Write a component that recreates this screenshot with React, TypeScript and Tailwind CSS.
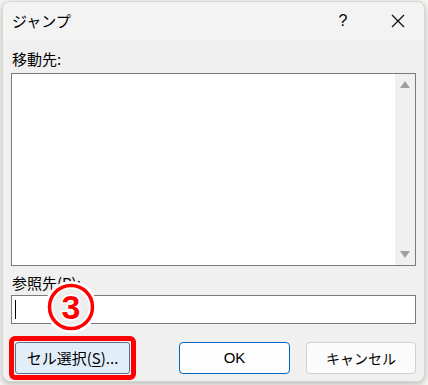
import React from 'react';

const font = { fontFamily: '"Noto Sans CJK JP", "Noto Sans", sans-serif' };

// Circled step marker drawn over the dialog
const StepBadge: React.FC = () => (
  <svg width="54" height="54" viewBox="0 0 54 54" className="absolute left-[41px] top-[278px]">
    <circle cx="27" cy="27" r="26" fill="white" />
    <circle cx="27" cy="27" r="21.5" fill="none" stroke="#ff0000" strokeWidth="3.5" />
    <circle cx="27" cy="27" r="18" fill="#dcdcdc" opacity="0.5" />
    <text
      x="27"
      y="39"
      textAnchor="middle"
      fontSize="34"
      fontWeight="700"
      fill="#ff0000"
      stroke="white"
      strokeWidth="3"
      paintOrder="stroke"
      style={{ fontFamily: '"Liberation Sans", Arial, sans-serif' }}
    >
      3
    </text>
  </svg>
);

const App: React.FC = () => {
  return (
    <div className="w-[428px] h-[385px] bg-[#f6f5f1] pl-[2px] pt-[1px]" style={font}>
      <div className="relative w-[423px] h-[381px] bg-[#f0f0f0] rounded-[8px] border border-[#d6d6d6] shadow-[0_2px_6px_rgba(0,0,0,0.25)] overflow-hidden">
        {/* Title bar */}
        <div className="h-[38px] bg-[#f3f3f3] flex items-center pl-[9px] text-[15px] text-black">
          <span>ジャンプ</span>
          <span className="ml-auto w-[20px] text-center mr-[38px] font-['Liberation_Sans'] text-[16px]">?</span>
          <svg width="14" height="14" viewBox="0 0 14 14" className="mr-[19px]">
            <path d="M1 1 L13 13 M13 1 L1 13" stroke="#111" strokeWidth="1.3" />
          </svg>
        </div>

        <div className="px-[8px]">
          <div className="text-[15px] leading-[20px] mt-[9px] ml-[1px]">移動先:</div>
          {/* List box */}
          <div className="mt-[4px] h-[193px] border border-[#7a7a7a] bg-white flex">
            <div className="flex-1" />
            <div className="w-[20px] bg-[#f0f0f0] flex flex-col items-center justify-between py-[7px]">
              <svg width="10" height="7" viewBox="0 0 10 7">
                <path d="M5 0 L10 7 L0 7 Z" fill="#a0a0a0" />
              </svg>
              <svg width="10" height="7" viewBox="0 0 10 7">
                <path d="M0 0 L10 0 L5 7 Z" fill="#a0a0a0" />
              </svg>
            </div>
          </div>

          <div className="text-[15px] leading-[20px] mt-[7px] ml-[1px]">参照先(R):</div>
          {/* Text input */}
          <div className="mt-[2px] h-[29px] border border-[#7a7a7a] bg-white flex items-center pl-[3px]">
            <div className="w-px h-[19px] bg-black" />
          </div>

          {/* Buttons */}
          <div className="flex items-center mt-[12px]">
            <div className="rounded-[6px] border-[5px] border-[#ff0000] p-[1px] -ml-[2px]">
              <button className="w-[115px] h-[32px] bg-[#e0eef9] border border-[#5b6f8a] rounded-[3px] text-[15px] text-black">
                セル選択(<span className="underline underline-offset-2">S</span>)...
              </button>
            </div>
            <button className="ml-[43px] w-[112px] h-[32px] bg-[#fdfdfd] border border-[#0067c0] rounded-[4px] text-[15px] text-black font-['Liberation_Sans']">
              OK
            </button>
            <button className="ml-[16px] w-[111px] h-[32px] bg-[#fbfbfb] border border-[#d0d0d0] rounded-[4px] text-[14px] text-black">
              キャンセル
            </button>
          </div>
        </div>

        <StepBadge />
      </div>
    </div>
  );
};

export default App;
